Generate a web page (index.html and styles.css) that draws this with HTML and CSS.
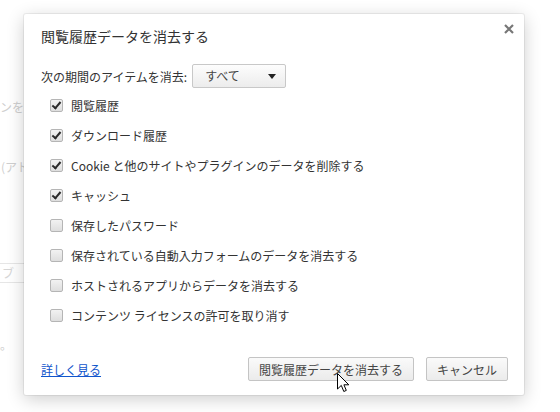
FILE: index.html
```html
<!DOCTYPE html>
<html lang="ja">
<head>
    <meta charset="UTF-8">
    <title>閲覧履歴データを消去する</title>
    <link rel="stylesheet" href="styles.css">
</head>
<body>
    <!-- settings page behind the dialog -->
    <div class="page">
        <p class="pl l1">ンを</p>
        <p class="pl l2">(アド</p>
        <div class="pbox">ブ</div>
        <p class="pl l3">。</p>
    </div>

    <div class="dlg">
        <div class="dh">
            <h1>閲覧履歴データを消去する</h1>
            <svg class="close" width="10" height="10" viewBox="0 0 10 10">
                <path d="M1 1 L9 9 M9 1 L1 9" stroke="#777" stroke-width="2.2" fill="none"/>
            </svg>
        </div>

        <div class="range">
            <span>次の期間のアイテムを消去:</span>
            <div class="sel">すべて<span class="arr"></span></div>
        </div>

        <ul class="opts">
            <li><span class="cb on"></span>閲覧履歴</li>
            <li><span class="cb on"></span>ダウンロード履歴</li>
            <li><span class="cb on"></span>Cookie と他のサイトやプラグインのデータを削除する</li>
            <li><span class="cb on"></span>キャッシュ</li>
            <li><span class="cb"></span>保存したパスワード</li>
            <li><span class="cb"></span>保存されている自動入力フォームのデータを消去する</li>
            <li><span class="cb"></span>ホストされるアプリからデータを消去する</li>
            <li><span class="cb"></span>コンテンツ ライセンスの許可を取り消す</li>
        </ul>

        <div class="df">
            <a href="#">詳しく見る</a>
            <div class="btns">
                <button>閲覧履歴データを消去する</button>
                <button>キャンセル</button>
            </div>
        </div>
    </div>

    <svg class="cursor" width="13" height="20" viewBox="0 0 13 20">
        <path d="M0.5 0.5 L0.5 16 L4.3 12.4 L6.8 18.5 L9.3 17.4 L6.9 11.8 L11.8 11.8 Z" fill="#fff" stroke="#000" stroke-width="1"/>
    </svg>
</body>
</html>
```

FILE: styles.css
```css
body {
    margin: 0;
    width: 560px;
    height: 412px;
    overflow: hidden;
    background-color: #fff;
    font-family: "Noto Sans CJK JP", "Noto Sans", sans-serif;
    font-size: 12px;
    color: #333;
}
.page {
    width: 24px;
    overflow: hidden;
    padding-top: 97px;
    color: #cfcfcf;
    font-size: 12px;
}
.pl {
    margin: 0;
    line-height: 20px;
    white-space: nowrap;
}
.l1 {
    margin-left: 0;
}
.l2 {
    margin-top: 40px;
    margin-left: 1px;
}
.pbox {
    margin-top: 86px;
    width: 22px;
    height: 18px;
    line-height: 18px;
    padding-left: 2px;
    border-top: 1px solid #e6e6e6;
    border-bottom: 1px solid #e6e6e6;
    color: #d6d6d6;
    box-sizing: content-box;
    overflow: hidden;
}
.l3 {
    margin-top: 52px;
}
.dlg {
    position: absolute;
    left: 24px;
    top: 14px;
    width: 500px;
    height: 381px;
    box-sizing: border-box;
    background-color: #fff;
    border-radius: 2px;
    box-shadow: 0 4px 18px rgba(0, 0, 0, 0.2), 0 0 0 1px rgba(0, 0, 0, 0.06);
    display: flex;
    flex-direction: column;
    padding: 0 17px 0 17px;
}
.dh {
    display: flex;
    justify-content: space-between;
    align-items: flex-start;
    padding-top: 12px;
    height: 38px;
}
.dh h1 {
    margin: 0;
    font-size: 14px;
    font-weight: normal;
    line-height: 20px;
    color: #333;
}
.close {
    margin-top: -2px;
    margin-right: -7px;
}
.range {
    display: flex;
    align-items: center;
    gap: 5px;
    height: 24px;
}
.sel {
    position: relative;
    box-sizing: border-box;
    width: 94px;
    height: 24px;
    line-height: 22px;
    padding-left: 12px;
    border: 1px solid #c8c8c8;
    border-radius: 2px;
    background: linear-gradient(#fdfdfd, #ececec);
    color: #444;
}
.arr {
    position: absolute;
    right: 9px;
    top: 9px;
    border-left: 4px solid transparent;
    border-right: 4px solid transparent;
    border-top: 5px solid #222;
}
.opts {
    list-style: none;
    margin: 2px 0 0 0;
    padding: 0 0 0 9px;
}
.opts li {
    display: flex;
    align-items: center;
    height: 30.1px;
    white-space: nowrap;
}
.cb {
    position: relative;
    width: 11px;
    height: 11px;
    margin-right: 8px;
    border: 1px solid #b5b5b5;
    border-radius: 2px;
    background: linear-gradient(#f2f2f2, #dedede);
}
.cb.on::after {
    content: "";
    position: absolute;
    left: 3px;
    top: 0px;
    width: 3px;
    height: 7px;
    border-right: 2.5px solid #2a2a2a;
    border-bottom: 2.5px solid #2a2a2a;
    transform: rotate(40deg);
}
.df {
    margin-top: auto;
    display: flex;
    justify-content: space-between;
    align-items: center;
    padding-bottom: 14px;
}
.df a {
    color: #15c;
    text-decoration: underline;
}
.btns {
    display: flex;
    gap: 12px;
    margin-right: -1px;
}
.btns button {
    height: 24px;
    padding: 0 10px;
    border: 1px solid #c4c4c4;
    border-radius: 2px;
    background: linear-gradient(#fafafa, #ebebeb);
    font-family: inherit;
    font-size: 12px;
    color: #444;
}
.cursor {
    position: absolute;
    left: 337px;
    top: 373px;
}
```
